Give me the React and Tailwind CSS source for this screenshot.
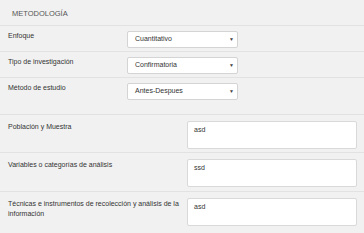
const selects = [
  { label: 'Enfoque', value: 'Cuantitativo' },
  { label: 'Tipo de investigación', value: 'Confirmatoria' },
  { label: 'Método de estudio', value: 'Antes-Despues' },
]

const areas = [
  { label: 'Población y Muestra', value: 'asd', h: 'h-[38px]' },
  { label: 'Variables o categorías de análisis', value: 'ssd', h: 'h-[39px]' },
  { label: 'Técnicas e instrumentos de recolección y análisis de la información', value: 'asd', h: 'h-[40px]' },
]

export default function App() {
  return (
    <div
      className="w-[364px] h-[233px] overflow-hidden bg-[#f1f1f1] text-[#333]"
      style={{ fontFamily: '"Liberation Sans", Arial, sans-serif' }}
    >
      <div className="h-[26px] border-b border-[#e2e2e2] pl-[12px] pt-[9px] text-[7.5px] font-normal leading-[9px] text-[#555]">
        METODOLOGÍA
      </div>

      {selects.map((s, i) => (
        <div
          key={s.label}
          className={`flex items-start border-b border-[#e2e2e2] pl-[8px] ${i === 2 ? 'h-[37px]' : 'h-[26px]'} pt-[5px]`}
        >
          <div className="w-[119px] pt-[1px] text-[7px] leading-[8px]">{s.label}</div>
          <div className="flex h-[17px] w-[111px] items-center justify-between rounded-[2px] border border-[#d4d4d4] bg-white pl-[7px] pr-[3px] text-[7px]">
            <span>{s.value}</span>
            <span className="text-[5px] text-[#444]">▼</span>
          </div>
        </div>
      ))}

      {areas.map((a, i) => (
        <div
          key={a.label}
          className={`flex items-start pl-[8px] pt-[6px] ${a.h} ${i < 2 ? 'border-b border-[#e2e2e2]' : ''}`}
        >
          <div className="w-[179px] pr-[8px] pt-[1px] text-[7px] leading-[10px]">{a.label}</div>
          <div className="h-[28px] w-[170px] rounded-[2px] border border-[#d9d9d9] bg-white px-[6px] pt-[3px] text-[7px]">
            {a.value}
          </div>
        </div>
      ))}
    </div>
  )
}
